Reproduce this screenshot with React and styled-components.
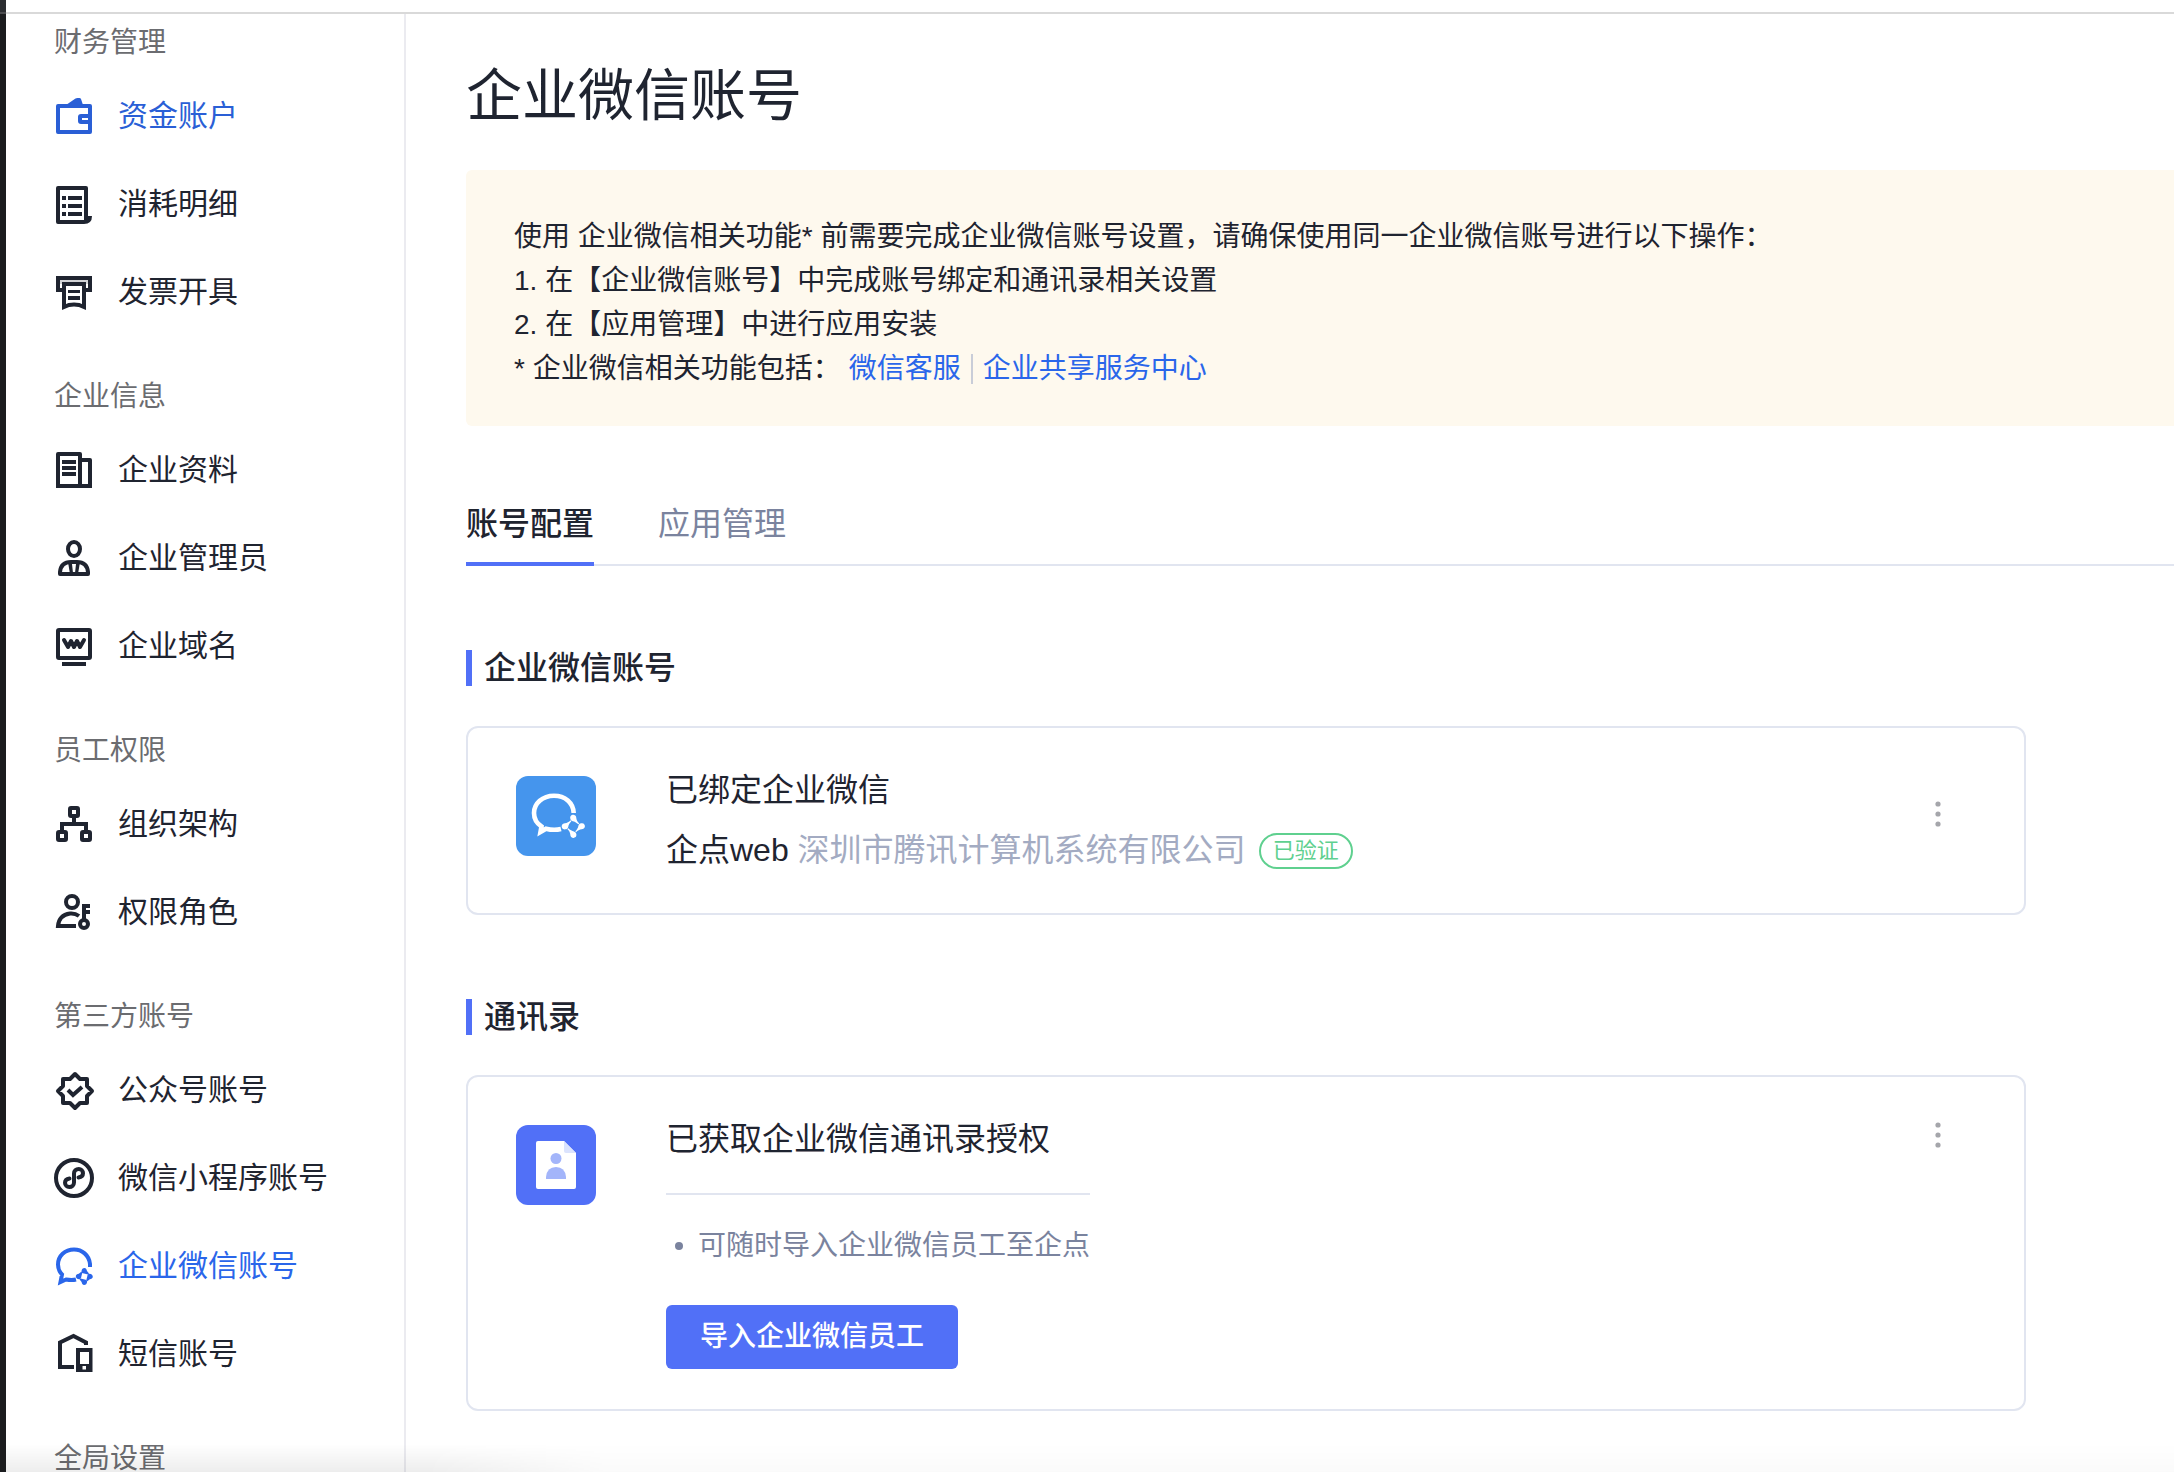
import React, { useState } from "react";
import styled, { createGlobalStyle } from "styled-components";

const menu = [
    {
        title: "财务管理",
        items: [
            { name: "资金账户", icon: "wallet", color: "#2a5fd6" },
            { name: "消耗明细", icon: "list" },
            { name: "发票开具", icon: "invoice" },
        ],
    },
    {
        title: "企业信息",
        items: [
            { name: "企业资料", icon: "building" },
            { name: "企业管理员", icon: "admin" },
            { name: "企业域名", icon: "domain" },
        ],
    },
    {
        title: "员工权限",
        items: [
            { name: "组织架构", icon: "org" },
            { name: "权限角色", icon: "role" },
        ],
    },
    {
        title: "第三方账号",
        items: [
            { name: "公众号账号", icon: "official" },
            { name: "微信小程序账号", icon: "mini" },
            { name: "企业微信账号", icon: "wecom", color: "#2a66ea" },
            { name: "短信账号", icon: "sms" },
        ],
    },
    { title: "全局设置", items: [] },
];

const tabs = ["账号配置", "应用管理"];

const icons = {
    wallet: (
        <>
            <path d="M12 9L21.5 2.5Q22.3 2 23.5 2H25.5Q26.5 2 27 3L29 9Z" />
            <path fillRule="evenodd" d="M4 8H36Q38 8 38 10V36Q38 38 36 38H4Q2 38 2 36V10Q2 8 4 8ZM6 12V34H34V28H27Q24 28 24 25V21Q24 18 27 18H34V12ZM28 22V24H34V22Z" />
        </>
    ),
    list: (
        <>
            <path fillRule="evenodd" d="M4 2H32Q34 2 34 4V32H38Q38 40 30 40H4Q2 40 2 38V4Q2 2 4 2ZM6 6V36H30V6Z" />
            <path d="M8 12h4v4H8zM14 12h14v4H14zM8 20h4v4H8zM14 20h14v4H14zM8 28h4v4H8zM14 28h14v4H14z" />
        </>
    ),
    invoice: (
        <>
            <path d="M9 18H4V6H36V18H31" fill="none" stroke="currentColor" strokeWidth="4" />
            <path d="M6 8H34V12H6Z" opacity="0.2" />
            <path d="M10 12H30V35L25 33Q20 32 15 33L10 35Z" fill="none" stroke="currentColor" strokeWidth="4" />
            <path d="M14 18h12v3H14zM14 24h12v4H14z" />
        </>
    ),
    building: (
        <>
            <path fillRule="evenodd" d="M4 2H26Q28 2 28 4V8H36Q38 8 38 10V38H2V4Q2 2 4 2ZM6 6V34H24V6ZM28 12V34H34V12Z" />
            <path d="M8 10h14v4H8zM8 16h14v4H8zM8 22h14v4H8z" />
        </>
    ),
    admin: (
        <>
            <ellipse cx="20" cy="11" rx="6" ry="7" fill="none" stroke="currentColor" strokeWidth="4" />
            <path d="M6 36V34Q7 24 17 24H23Q33 24 34 34V36Z" fill="none" stroke="currentColor" strokeWidth="4" strokeLinejoin="round" />
            <path d="M14 24H26L24 36H16ZM18 26L19 35H21L22 26Z" fillRule="evenodd" />
        </>
    ),
    domain: (
        <>
            <rect x="4" y="4" width="32" height="28" rx="1" fill="none" stroke="currentColor" strokeWidth="4" />
            <path d="M10 14L14 21L17 15L20 21L23 15L26 21L30 14" fill="none" stroke="currentColor" strokeWidth="4" strokeLinejoin="round" strokeLinecap="round" />
            <path d="M8 36h24v4H8z" />
        </>
    ),
    org: (
        <g fill="none" stroke="currentColor" strokeWidth="4">
            <rect x="16" y="4" width="8" height="8" rx="1" />
            <rect x="4" y="28" width="8" height="8" rx="1" />
            <rect x="28" y="28" width="8" height="8" rx="1" />
            <path d="M20 13V20M8 27V20H32V27" />
        </g>
    ),
    role: (
        <g fill="none" stroke="currentColor" strokeWidth="4">
            <circle cx="18" cy="10" r="6" />
            <path d="M25 24Q21 21 16 21.500Q5 23 4 34H22" />
            <circle cx="30" cy="32" r="4" />
            <path d="M30 28V14H36M30 20H36" />
        </g>
    ),
    official: (
        <g fill="none" stroke="currentColor" strokeWidth="4">
            <path d="M21 4L26 9H33V16L38 21L33 26V33H26L21 38L16 33H9V26L4 21L9 16V9H16Z" strokeLinejoin="round" />
            <path d="M14 20L19 25L28 17" />
        </g>
    ),
    mini: (
        <g fill="none" stroke="currentColor" strokeWidth="4" strokeLinecap="round">
            <circle cx="20" cy="20" r="18" />
            <path d="M24.500 19.500C27.500 19 29 17.300 29 15.200C29 12.600 27 11 24.800 11C22 11 20 13 20 15.500V24.500C20 27 18 29 15.200 29C13 29 11 27.400 11 24.800C11 22.700 12.500 21 15.500 20.500" />
        </g>
    ),
    wecom: (
        <>
            <path d="M36 21V18C35 9 28 3.500 20 3.500C11 3.500 4 10 4 18.500C4 23 5.500 26 8 28.500L6.500 36L12 33.500C15 34 18 34.500 22 33.500" fill="none" stroke="currentColor" strokeWidth="4" />
            {[0, 90, 180, 270].map((deg) => (
                <path
                    key={deg}
                    transform={`rotate(${deg} 30.300 30.500)`}
                    d="M27.500 25.500C27.500 23 29 22 30.500 22C32 22 32.800 23.500 33 25L35 27.500L34 28.500L30 27.500C28.500 27.300 27.500 26.800 27.500 25.500Z"
                />
            ))}
        </>
    ),
    sms: (
        <>
            <path d="M20 33H6V8.500L19.500 2L32 8.500V11" fill="none" stroke="currentColor" strokeWidth="4" />
            <path fillRule="evenodd" d="M22 14H38.500V38H22ZM26 18V30H35V18ZM28.500 32V35.500H32V32Z" />
        </>
    ),
};

const WecomLogo = () => (
    <svg width="80" height="80" viewBox="0 0 80 80" aria-hidden="true">
        <rect width="80" height="80" rx="12" fill="#4595ed" />
        <path
            d="M57.700 37C57.300 26.500 49 19.700 38 19.700C26.500 19.700 18 27.500 18 37C18 43 21 47.500 25.500 50.500L24.500 56L30 52.700C35 54 40 54.200 45 53"
            fill="none"
            stroke="#fff"
            strokeWidth="4.600"
        />
        <g fill="#fff">
            {[0, 90, 180, 270].map((deg) => (
                <path
                    key={deg}
                    transform={`rotate(${deg} 57.300 50.300)`}
                    d="M54.300 42.500C53.700 39.500 56 38.500 57.500 38.700C59.500 39 60.200 40.300 60.300 42C60.500 44 61.500 46 63.300 47.500L62.300 48.300C60.500 46.500 58.500 45.500 56.700 45.200C55.200 44.800 54.500 43.800 54.300 42.500Z"
                />
            ))}
        </g>
    </svg>
);

const ContactsLogo = () => (
    <svg width="80" height="80" viewBox="0 0 80 80" aria-hidden="true">
        <rect width="80" height="80" rx="12" fill="#5170f7" />
        <path d="M22 16H48L60 28V62Q60 64 58 64H22Q20 64 20 62V18Q20 16 22 16Z" fill="#fff" />
        <path d="M48 16L60 28H50Q48 28 48 26Z" fill="#dbe3fd" />
        <circle cx="40" cy="33.500" r="5.500" fill="#a3b5fa" />
        <path d="M30 54V52Q31 42 40 42Q49 42 50 52V54Z" fill="#a3b5fa" />
    </svg>
);

const MoreIcon = () => (
    <svg width="8" height="28" viewBox="0 0 8 28" fill="#a5a6ab" aria-hidden="true">
        <circle cx="4" cy="4" r="2.600" />
        <circle cx="4" cy="14" r="2.600" />
        <circle cx="4" cy="24" r="2.600" />
    </svg>
);

const App = () => {
    const [tabActivo, cambiarTabActivo] = useState(0);

    return (
        <>
            <GlobalStyle />
            <Shell>
                <Rail />
                <Page>
                    <TopBar />
                    <Body>
                        <Sidebar>
                            {menu.map((group) => (
                                <section key={group.title}>
                                    <GroupTitle>{group.title}</GroupTitle>
                                    {group.items.map((item) => (
                                        <MenuItem href="#" key={item.name} $color={item.color}>
                                            <svg width="40" height="40" viewBox="0 0 40 40" fill="currentColor" aria-hidden="true">
                                                {icons[item.icon]}
                                            </svg>
                                            {item.name}
                                        </MenuItem>
                                    ))}
                                </section>
                            ))}
                        </Sidebar>
                        <Main>
                            <PageTitle>企业微信账号</PageTitle>
                            <Notice>
                                <p>使用 企业微信相关功能* 前需要完成企业微信账号设置，请确保使用同一企业微信账号进行以下操作：</p>
                                <p>1. 在【企业微信账号】中完成账号绑定和通讯录相关设置</p>
                                <p>2. 在【应用管理】中进行应用安装</p>
                                <NoticeLinks>
                                    <span>* 企业微信相关功能包括：</span>
                                    <a href="#">微信客服</a>
                                    <Separator />
                                    <a href="#">企业共享服务中心</a>
                                </NoticeLinks>
                            </Notice>
                            <TabList role="tablist">
                                {tabs.map((tab, i) => (
                                    <Tab
                                        key={tab}
                                        role="tab"
                                        aria-selected={i === tabActivo}
                                        $active={i === tabActivo}
                                        onClick={() => cambiarTabActivo(i)}
                                    >
                                        {tab}
                                    </Tab>
                                ))}
                            </TabList>

                            <SectionTitle>企业微信账号</SectionTitle>
                            <Card>
                                <LogoBox><WecomLogo /></LogoBox>
                                <Info>
                                    <CardTitle>已绑定企业微信</CardTitle>
                                    <Company>
                                        <span>企点web <small>深圳市腾讯计算机系统有限公司</small></span>
                                        <Tag>已验证</Tag>
                                    </Company>
                                </Info>
                                <MoreButton aria-label="更多" $top="28px"><MoreIcon /></MoreButton>
                            </Card>

                            <SectionTitle>通讯录</SectionTitle>
                            <Card>
                                <LogoBox><ContactsLogo /></LogoBox>
                                <Info>
                                    <CardTitle>已获取企业微信通讯录授权</CardTitle>
                                    <Tips>
                                        <li>可随时导入企业微信员工至企点</li>
                                    </Tips>
                                    <ImportButton>导入企业微信员工</ImportButton>
                                </Info>
                                <MoreButton aria-label="更多"><MoreIcon /></MoreButton>
                            </Card>
                        </Main>
                    </Body>
                </Page>
                <BottomShade />
            </Shell>
        </>
    );
};
export default App;

const GlobalStyle = createGlobalStyle`
    *{
        box-sizing: border-box;
    }
    body{
        margin: 0;
        background: #fff;
        color: #1f2430;
        font-family: "Liberation Sans", "Noto Sans CJK SC", sans-serif;
    }
    h1, h2, h3, p, ul{
        margin: 0;
        padding: 0;
    }
    a{
        text-decoration: none;
    }
    button{
        border: 0;
        padding: 0;
        background: none;
        font-family: inherit;
        cursor: pointer;
    }
`;

const Shell = styled.div`
    display: flex;
    height: 100vh;
    overflow: hidden;
`;

const Rail = styled.div`
    flex: none;
    width: 6px;
    background: linear-gradient(#2b2d31 12px, #4b4c4f 12px, #4b4c4f 14px, #1b1c1e 14px);
`;

const Page = styled.div`
    flex: 1;
    min-width: 0;
    display: flex;
    flex-direction: column;
`;

const TopBar = styled.header`
    flex: none;
    height: 14px;
    border-bottom: 2px solid #d9d9d9;
`;

const Body = styled.div`
    flex: 1;
    min-height: 0;
    display: flex;
`;

const Sidebar = styled.nav`
    flex: none;
    width: 400px;
    padding-top: 9px;
    overflow: hidden;
    border-right: 2px solid #ebebf0;

    section + section{
        margin-top: 41px;
    }
`;

const GroupTitle = styled.h3`
    margin: 0 48px 9px;
    font-size: 28px;
    font-weight: 400;
    line-height: 40px;
    color: #6b6c70;
`;

const MenuItem = styled.a`
    display: flex;
    align-items: center;
    gap: 24px;
    height: 88px;
    padding: 0 48px;
    font-size: 30px;
    line-height: 40px;
    white-space: nowrap;
    color: ${(props) => props.$color || "#1f2430"};

    svg{
        flex: none;
        overflow: visible;
    }
`;

const Main = styled.main`
    flex: 1;
    min-width: 0;
    overflow: hidden;
    padding: 49px 0 0 60px;
`;

const PageTitle = styled.h1`
    margin-bottom: 41px;
    font-size: 56px;
    font-weight: 400;
    line-height: 66px;
`;

const Notice = styled.div`
    padding: 45px 48px 35px;
    border-radius: 6px 0 0 6px;
    background: #fef9ee;
    font-size: 28px;
    line-height: 44px;
`;

const NoticeLinks = styled.div`
    display: flex;
    align-items: center;

    a{
        color: #2a66ea;
    }
    span{
        margin-right: 8px;
    }
`;

const Separator = styled.i`
    width: 2px;
    height: 30px;
    margin: 0 10px;
    background: #c9cdd8;
`;

const TabList = styled.div`
    display: flex;
    gap: 64px;
    margin-top: 48px;
    box-shadow: inset 0 -2px #e1e5f0;
`;

const Tab = styled.button`
    padding: 30px 0 18px;
    border-bottom: 4px solid ${(props) => (props.$active ? "#5170f7" : "transparent")};
    font-size: 32px;
    font-weight: ${(props) => (props.$active ? 500 : 400)};
    line-height: 40px;
    color: ${(props) => (props.$active ? "#1f2430" : "#7a839e")};
`;

const SectionTitle = styled.h2`
    margin: 84px 0 40px;
    padding-left: 12px;
    border-left: 6px solid #5170f7;
    font-size: 32px;
    font-weight: 500;
    line-height: 36px;
`;

const Card = styled.div`
    display: flex;
    align-items: flex-start;
    max-width: 1560px;
    padding: 40px 68px 40px 48px;
    border: 2px solid #e1e5f0;
    border-radius: 12px;
`;

const LogoBox = styled.div`
    flex: none;
    width: 150px;
    padding-top: 8px;

    svg{
        display: block;
    }
`;

const Info = styled.div`
    display: flex;
    flex-direction: column;
    align-items: flex-start;
`;

const CardTitle = styled.h3`
    font-size: 32px;
    font-weight: 400;
    line-height: 44px;
`;

const Company = styled.div`
    display: flex;
    align-items: center;
    gap: 13px;
    margin-top: 16px;
    font-size: 32px;
    line-height: 45px;

    small{
        font-size: 32px;
        color: #a3abc2;
    }
`;

const Tag = styled.span`
    padding: 0 12px;
    border: 2px solid #5fd08f;
    border-radius: 18px;
    font-size: 22px;
    line-height: 32px;
    color: #5fd08f;
`;

const Tips = styled.ul`
    margin-top: 32px;
    padding: 29px 0 37px;
    border-top: 2px solid #e1e5f0;
    list-style: none;
    font-size: 28px;
    line-height: 44px;
    color: #7a839e;

    li{
        display: flex;
        align-items: center;
        gap: 15px;
        padding-left: 9px;
    }
    li::before{
        content: "";
        width: 8px;
        height: 8px;
        border-radius: 50%;
        background: currentColor;
    }
`;

const ImportButton = styled.button`
    padding: 0 34px;
    border-radius: 6px;
    background: #5170f7;
    color: #fff;
    font-size: 28px;
    font-weight: 500;
    line-height: 64px;
`;

const MoreButton = styled.button`
    display: flex;
    align-items: center;
    justify-content: center;
    width: 36px;
    height: 36px;
    margin-left: auto;
    margin-top: ${(props) => props.$top || 0};
`;

const BottomShade = styled.div`
    position: fixed;
    right: 0;
    bottom: 0;
    left: 6px;
    height: 28px;
    pointer-events: none;
    background: linear-gradient(transparent, rgba(0, 0, 0, 0.07));
    mask-image: linear-gradient(90deg, #000 420px, rgba(0, 0, 0, 0.25) 600px);
`;
